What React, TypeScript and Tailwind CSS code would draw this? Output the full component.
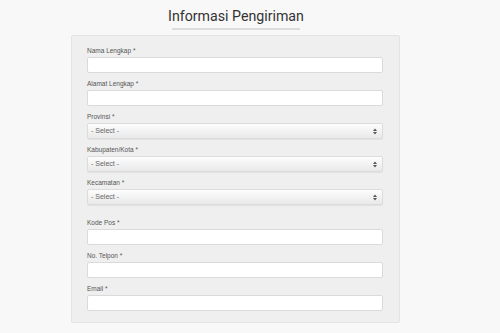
const fields = [
    { label: 'Nama Lengkap *', type: 'input' },
    { label: 'Alamat Lengkap *', type: 'input' },
    { label: 'Provinsi *', type: 'select' },
    { label: 'Kabupaten/Kota *', type: 'select' },
    { label: 'Kecamatan *', type: 'select' },
    { label: 'Kode Pos *', type: 'input', spaced: true },
    { label: 'No. Telpon *', type: 'input' },
    { label: 'Email *', type: 'input' },
]

function SelectBox() {
    return (
        <div className="h-[16px] w-full rounded-[2px] border border-[#dcdcdc] bg-gradient-to-b from-[#fdfdfd] to-[#e9e9e9] flex items-center justify-between pl-[3px] pr-[5px] shadow-[0_1px_1px_rgba(0,0,0,0.06)]">
            <span className="text-[7px] text-[#666]">- Select -</span>
            <svg width="4" height="7" viewBox="0 0 4 7">
                <path d="M0 3 L2 0.5 L4 3 Z" fill="#555" />
                <path d="M0 4 L2 6.5 L4 4 Z" fill="#555" />
            </svg>
        </div>
    )
}

export default function App() {
    return (
        <div className="w-[500px] h-[333px] bg-[#f8f8f8] overflow-hidden" style={{ fontFamily: '"Liberation Sans", Arial, sans-serif' }}>
            <div className="ml-[71px] w-[329px]">
                <div className="pt-[6px] flex flex-col items-center">
                    <h1 className="text-[14.2px] leading-[20px] text-[#333] pl-[1px]" style={{ fontFamily: 'Roboto, sans-serif' }}>
                        Informasi Pengiriman
                    </h1>
                    <div className="mt-[2px] h-[2px] w-[128px] bg-[#dcdcdc]" />
                </div>
                <div className="mt-[5px] h-[288px] rounded-[2px] border border-[#e4e4e4] bg-[#efefef] pt-[10px] pl-[15px] pr-[16px]">
                    {fields.map((f, i) => (
                        <div key={i} className={f.spaced ? 'mt-[13px]' : i === 0 ? '' : 'mt-[6px]'}>
                            <div className="text-[6.5px] leading-[10px] text-[#555]">{f.label}</div>
                            <div className="mt-[1px]">
                                {f.type === 'select' ? (
                                    <SelectBox />
                                ) : (
                                    <div className="h-[16px] w-full rounded-[2px] border border-[#dadada] bg-white" />
                                )}
                            </div>
                        </div>
                    ))}
                </div>
            </div>
        </div>
    )
}
